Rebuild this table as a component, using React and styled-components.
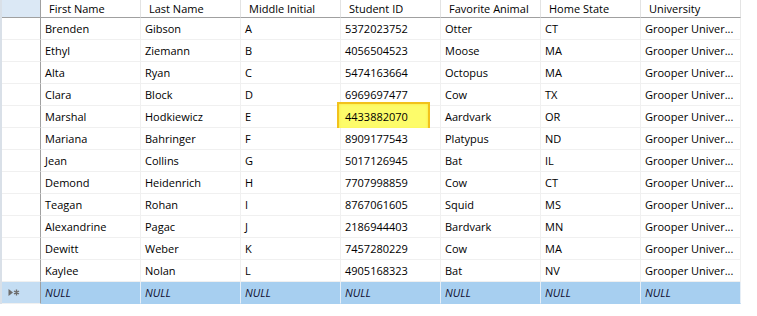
import React from "react";
import styled, { createGlobalStyle } from "styled-components";

const GlobalStyle = createGlobalStyle`
  html, body {
    margin: 0;
    padding: 0;
    background: #fff;
  }
  body {
    font-family: "Open Sans", "Noto Sans", sans-serif;
  }
`;

const Page = styled.div`
  width: 757px;
  height: 316px;
  background: #fff;
  overflow: hidden;
`;

const Grid = styled.div`
  display: grid;
  grid-template-columns: 39px repeat(7, 100px);
  width: 741px;
  border-left: 2px solid #d9e0e8;
  font-size: 11px;
  color: #000;
`;

const Corner = styled.div`
  height: 18px;
  background: #dbe8f5;
  border-right: 1px solid #a0a0a0;
  border-bottom: 1px solid #a0a0a0;
  box-sizing: border-box;
`;

const HeadCell = styled.div`
  height: 18px;
  box-sizing: border-box;
  padding-left: 8px;
  line-height: 17px;
  border-bottom: 1px solid #a0a0a0;
  border-right: 1px solid #e3e3e3;
  white-space: nowrap;
  overflow: hidden;
`;

const RowHead = styled.div`
  height: 22px;
  box-sizing: border-box;
  border-right: 1px solid #a0a0a0;
  border-bottom: 1px solid #f0f0f0;
  background: ${(p) => (p.$active ? "#c4ddf3" : "#fff")};
  display: flex;
  align-items: center;
  padding-left: 6px;
`;

const Cell = styled.div`
  position: relative;
  height: 22px;
  box-sizing: border-box;
  padding-left: 4px;
  line-height: 21px;
  border-right: 1px solid ${(p) => (p.$null ? "#e6eef6" : "#f0f0f0")};
  border-bottom: 1px solid ${(p) => (p.$null ? "#a7cff0" : "#f0f0f0")};
  background: ${(p) => (p.$null ? "#a7cff0" : "#fff")};
  font-style: ${(p) => (p.$null ? "italic" : "normal")};
  color: ${(p) => (p.$null ? "#101030" : "#000")};
  white-space: nowrap;
`;

const CellText = styled.span`
  position: relative;
  z-index: 1;
`;

const Highlight = styled.div`
  position: absolute;
  left: -4px;
  top: -4px;
  width: 93px;
  height: 29px;
  box-sizing: border-box;
  border: 2px solid #f2c21c;
  background: #fdfc6a;
  box-shadow: inset 0 0 3px #f6e640;
`;

const NewRowIcon = () => (
  <svg width="12" height="9" viewBox="0 0 12 9">
    <path d="M0.5 1 L5 4.5 L0.5 8 Z" fill="#6d6d6d" />
    <path
      d="M8.5 1.5 V7.5 M6 3 L11 6 M11 3 L6 6"
      stroke="#6d6d6d"
      strokeWidth="1.4"
    />
  </svg>
);

const headers = [
  "First Name",
  "Last Name",
  "Middle Initial",
  "Student ID",
  "Favorite Animal",
  "Home State",
  "University",
];

const rows = [
  ["Brenden", "Gibson", "A", "5372023752", "Otter", "CT"],
  ["Ethyl", "Ziemann", "B", "4056504523", "Moose", "MA"],
  ["Alta", "Ryan", "C", "5474163664", "Octopus", "MA"],
  ["Clara", "Block", "D", "6969697477", "Cow", "TX"],
  ["Marshal", "Hodkiewicz", "E", "4433882070", "Aardvark", "OR"],
  ["Mariana", "Bahringer", "F", "8909177543", "Platypus", "ND"],
  ["Jean", "Collins", "G", "5017126945", "Bat", "IL"],
  ["Demond", "Heidenrich", "H", "7707998859", "Cow", "CT"],
  ["Teagan", "Rohan", "I", "8767061605", "Squid", "MS"],
  ["Alexandrine", "Pagac", "J", "2186944403", "Bardvark", "MN"],
  ["Dewitt", "Weber", "K", "7457280229", "Cow", "MA"],
  ["Kaylee", "Nolan", "L", "4905168323", "Bat", "NV"],
];

export default function App() {
  return (
    <Page>
      <GlobalStyle />
      <Grid>
        <Corner />
        {headers.map((h) => (
          <HeadCell key={h}>{h}</HeadCell>
        ))}

        {rows.map((r, i) => (
          <React.Fragment key={i}>
            <RowHead />
            {[...r, "Grooper Univer..."].map((v, j) => (
              <Cell key={j}>
                {i === 4 && j === 3 && <Highlight />}
                <CellText>{v}</CellText>
              </Cell>
            ))}
          </React.Fragment>
        ))}

        <RowHead $active>
          <NewRowIcon />
        </RowHead>
        {headers.map((h) => (
          <Cell key={h} $null>
            NULL
          </Cell>
        ))}
      </Grid>
    </Page>
  );
}
